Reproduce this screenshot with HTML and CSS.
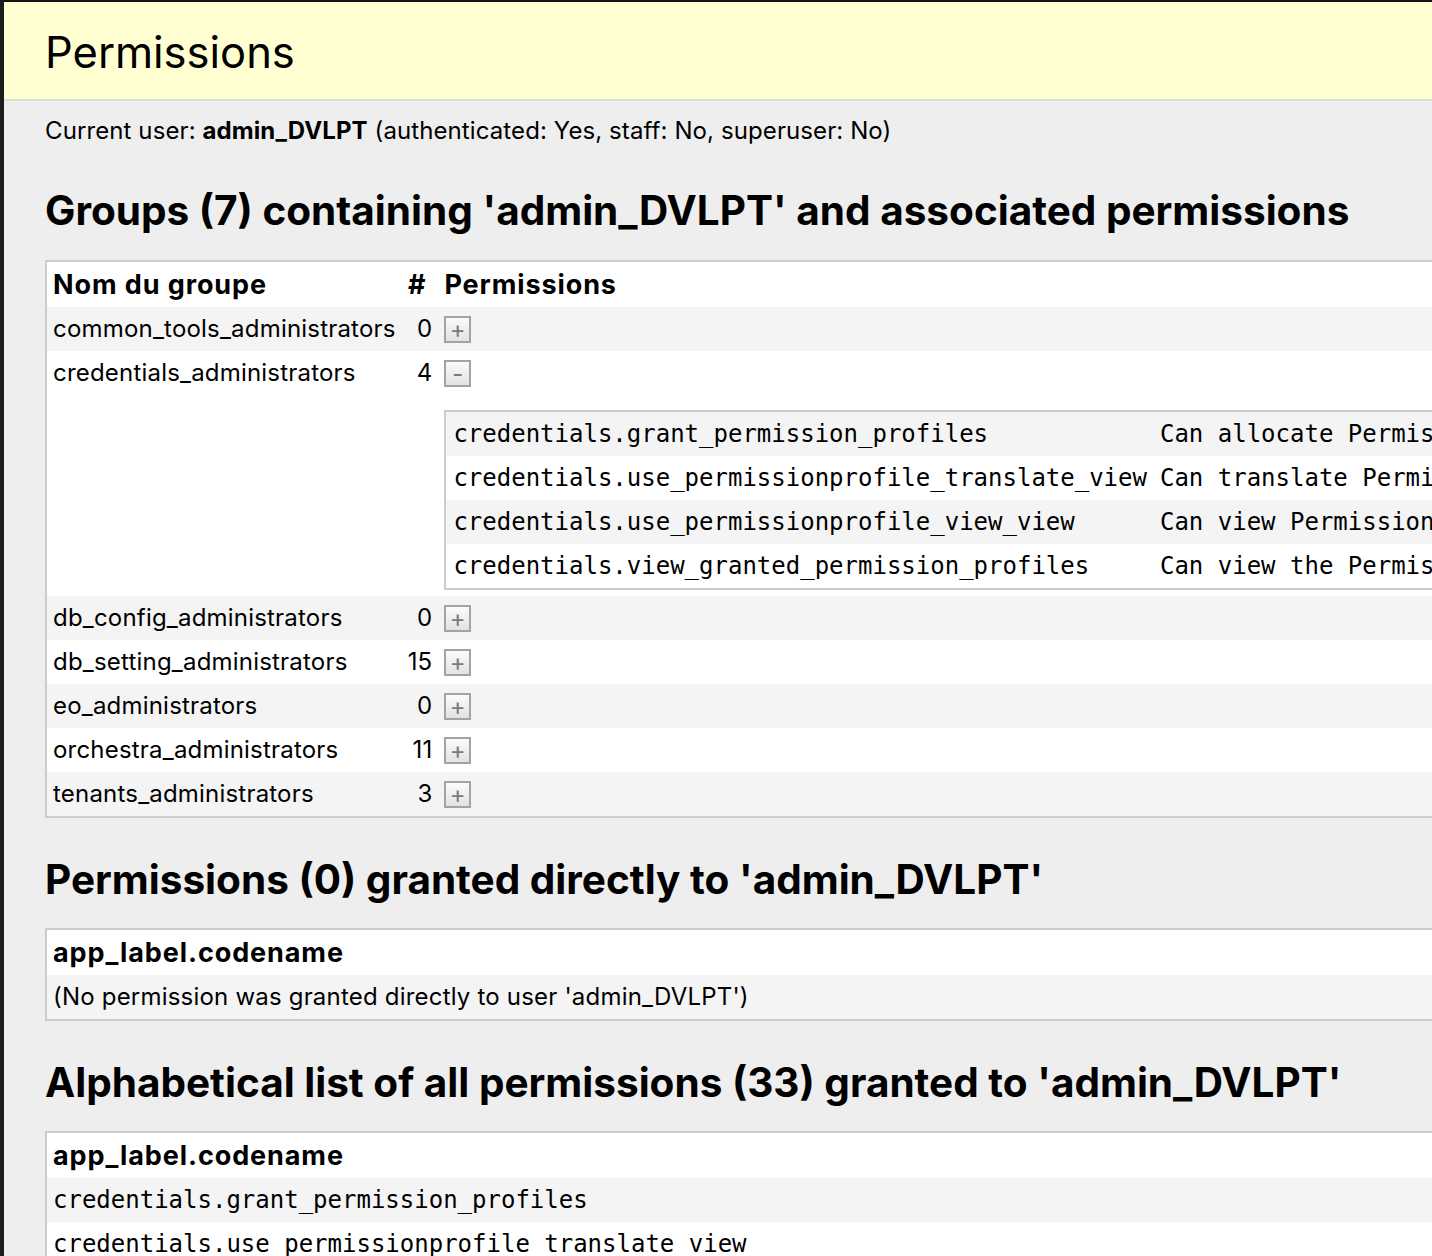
FILE: index.html
```html
<!DOCTYPE html>
<html lang="en">
<head>
<meta charset="utf-8">
<title>Permissions</title>
<link rel="stylesheet" href="styles.css">
</head>
<body>
<div class="frame">
  <header class="header">
    <h1 class="title">Permissions</h1>
  </header>
  <main class="content">
    <p class="user">Current user: <strong>admin_DVLPT</strong> (authenticated: Yes, staff: No, superuser: No)</p>

    <h2 class="section-title">Groups (7) containing 'admin_DVLPT' and associated permissions</h2>
    <table class="grid groups">
      <thead>
        <tr><th>Nom du groupe</th><th class="num">#</th><th>Permissions</th></tr>
      </thead>
      <tbody>
        <tr><td>common_tools_administrators</td><td class="num">0</td><td><span class="toggle">+</span></td></tr>
        <tr>
          <td>credentials_administrators</td><td class="num">4</td>
          <td class="perm-cell">
            <span class="toggle">-</span>
            <table class="grid nested">
              <tbody>
                <tr><td class="mono">credentials.grant_permission_profiles</td><td class="mono">Can allocate Permission profiles</td></tr>
                <tr><td class="mono">credentials.use_permissionprofile_translate_view</td><td class="mono">Can translate Permission profiles</td></tr>
                <tr><td class="mono">credentials.use_permissionprofile_view_view</td><td class="mono">Can view Permission profiles</td></tr>
                <tr><td class="mono">credentials.view_granted_permission_profiles</td><td class="mono">Can view the Permission profiles granted</td></tr>
              </tbody>
            </table>
          </td>
        </tr>
        <tr><td>db_config_administrators</td><td class="num">0</td><td><span class="toggle">+</span></td></tr>
        <tr><td>db_setting_administrators</td><td class="num">15</td><td><span class="toggle">+</span></td></tr>
        <tr><td>eo_administrators</td><td class="num">0</td><td><span class="toggle">+</span></td></tr>
        <tr><td>orchestra_administrators</td><td class="num">11</td><td><span class="toggle">+</span></td></tr>
        <tr><td>tenants_administrators</td><td class="num">3</td><td><span class="toggle">+</span></td></tr>
      </tbody>
    </table>

    <h2 class="section-title">Permissions (0) granted directly to 'admin_DVLPT'</h2>
    <table class="grid full">
      <thead><tr><th>app_label.codename</th></tr></thead>
      <tbody>
        <tr><td>(No permission was granted directly to user 'admin_DVLPT')</td></tr>
      </tbody>
    </table>

    <h2 class="section-title">Alphabetical list of all permissions (33) granted to 'admin_DVLPT'</h2>
    <table class="grid full">
      <thead><tr><th>app_label.codename</th></tr></thead>
      <tbody>
        <tr><td class="mono">credentials.grant_permission_profiles</td></tr>
        <tr><td class="mono">credentials.use_permissionprofile_translate_view</td></tr>
        <tr><td class="mono">credentials.use_permissionprofile_view_view</td></tr>
        <tr><td class="mono">credentials.view_granted_permission_profiles</td></tr>
        <tr><td class="mono">db_setting.add_setting</td></tr>
        <tr><td class="mono">db_setting.change_setting</td></tr>
      </tbody>
    </table>
  </main>
</div>
</body>
</html>
```

FILE: styles.css
```css
html, body {
  margin: 0;
  padding: 0;
  overflow: hidden;
  background: #eeeeee;
}

body {
  font-family: Inter, "Noto Sans", "Liberation Sans", sans-serif;
  color: #000;
  font-size: 24px;
  letter-spacing: 0.1px;
}

.frame {
  border-top: 2px solid #151515;
  border-left: 4px solid #1c1c1c;
  min-height: 1254px;
  box-sizing: border-box;
}

.header {
  background: #ffffd2;
  height: 97px;
  border-bottom: 2px solid #dcdcdc;
  padding: 0 41px;
  display: flex;
  align-items: center;
}

.title {
  margin: 0;
  font-size: 43.5px;
  font-weight: 400;
  line-height: 1;
  letter-spacing: 0;
  padding-top: 5px;
}

.content {
  padding: 0 41px 40px;
  width: max-content;
}

.user {
  margin: 14px 0 0;
  line-height: 32px;
}

.user strong {
  font-weight: 700;
}

.section-title {
  font-size: 40.5px;
  font-weight: 700;
  line-height: 46px;
  margin: 41px 0 26px;
  letter-spacing: 0;
}

.grid + .section-title {
  margin-top: 39px;
  margin-bottom: 25px;
}

.grid {
  border-collapse: collapse;
  background: #fff;
  border: 2px solid #cccccc;
}

.grid th,
.grid td {
  text-align: left;
  padding: 6px 6px;
  line-height: 32px;
  vertical-align: top;
  white-space: nowrap;
}

.grid td {
  letter-spacing: 0.2px;
}

.grid th {
  font-size: 27px;
  font-weight: 700;
  letter-spacing: 0.9px;
  padding-top: 7px;
  padding-bottom: 6px;
}

.grid > tbody > tr:nth-child(odd) {
  background: #f4f4f4;
}

.grid th.num,
.grid td.num {
  text-align: right;
}

.groups th.num {
  padding-right: 12px;
}

.full {
  width: 100%;
}

.grid td.mono {
  font-family: "DejaVu Sans Mono", "Liberation Mono", monospace;
  font-size: 24px;
  letter-spacing: 0;
}

.perm-cell {
  padding-bottom: 5px;
}

.toggle {
  display: inline-flex;
  align-items: center;
  justify-content: center;
  box-sizing: border-box;
  width: 27px;
  height: 27px;
  margin-top: 3px;
  border: 2px solid #a3a3a3;
  background: linear-gradient(#fbfbfb, #e2e2e2);
  color: #7a7a7a;
  font-size: 24px;
  line-height: 1;
  vertical-align: top;
}

.nested {
  margin-top: 21px;
  margin-bottom: 0;
}

.nested td {
  padding: 6px 7px;
}

.nested td + td {
  padding-left: 6px;
}
```
